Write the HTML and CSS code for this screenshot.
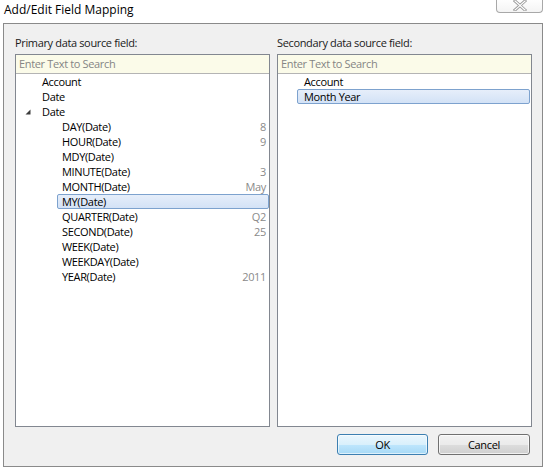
FILE: index.html
```html
<!DOCTYPE html>
<html>
<head>
<meta charset="utf-8">
<link rel="stylesheet" href="styles.css">
</head>
<body>
<div class="titlebar">
  <div class="title">Add/Edit Field Mapping</div>
  <div class="close">
    <svg width="14" height="11" viewBox="0 0 14 11">
      <path d="M2 1 L12 10 M12 1 L2 10" stroke="#9a9a9a" stroke-width="3" stroke-linecap="square" fill="none"/>
      <path d="M2 1 L12 10 M12 1 L2 10" stroke="#ffffff" stroke-width="1.2" stroke-linecap="square" fill="none"/>
    </svg>
  </div>
</div>
<div class="frame">
  <div class="columns">
    <div class="col">
      <div class="label">Primary data source field:</div>
      <div class="panel">
        <div class="search">Enter Text to Search</div>
        <div class="list">
          <div class="row top"><span class="name">Account</span></div>
          <div class="row top"><span class="name">Date</span></div>
          <div class="row top"><svg class="tri" width="6" height="6" viewBox="0 0 6 6"><polygon points="5.5,0.5 5.5,5.5 0.5,5.5" fill="#3c3c3c"/></svg><span class="name">Date</span></div>
          <div class="row child"><span class="name">DAY(Date)</span><span class="val">8</span></div>
          <div class="row child"><span class="name">HOUR(Date)</span><span class="val">9</span></div>
          <div class="row child"><span class="name">MDY(Date)</span><span class="val"></span></div>
          <div class="row child"><span class="name">MINUTE(Date)</span><span class="val">3</span></div>
          <div class="row child"><span class="name">MONTH(Date)</span><span class="val">May</span></div>
          <div class="row child sel"><span class="name">MY(Date)</span><span class="val"></span></div>
          <div class="row child"><span class="name">QUARTER(Date)</span><span class="val">Q2</span></div>
          <div class="row child"><span class="name">SECOND(Date)</span><span class="val">25</span></div>
          <div class="row child"><span class="name">WEEK(Date)</span><span class="val"></span></div>
          <div class="row child"><span class="name">WEEKDAY(Date)</span><span class="val"></span></div>
          <div class="row child"><span class="name">YEAR(Date)</span><span class="val">2011</span></div>
        </div>
      </div>
    </div>
    <div class="col">
      <div class="label">Secondary data source field:</div>
      <div class="panel">
        <div class="search">Enter Text to Search</div>
        <div class="list">
          <div class="row rtop"><span class="name">Account</span></div>
          <div class="row rtop sel"><span class="name">Month Year</span></div>
        </div>
      </div>
    </div>
  </div>
  <div class="buttons">
    <div class="btn ok">OK</div>
    <div class="btn cancel">Cancel</div>
  </div>
</div>
</body>
</html>
```

FILE: styles.css
```css
* { box-sizing: border-box; }
html, body {
  margin: 0;
  padding: 0;
  background: #ffffff;
  font-family: "Open Sans", "Noto Sans", sans-serif;
  font-size: 11px;
  letter-spacing: -0.35px;
  color: #000;
}
body { width: 548px; height: 472px; overflow: hidden; }

.titlebar {
  height: 23px;
  display: flex;
  justify-content: space-between;
  align-items: flex-start;
  padding-left: 4px;
  padding-right: 5px;
}
.title {
  font-size: 12px;
  letter-spacing: 0;
  line-height: 19px;
  color: #000;
}
.close {
  width: 47px;
  height: 14px;
  margin-top: -1px;
  border: 1px solid #a8a8a8;
  border-top: none;
  border-radius: 0 0 4px 4px;
  background: linear-gradient(#ffffff, #f4f4f4);
  display: flex;
  justify-content: center;
  align-items: center;
}

.frame {
  margin-left: 3px;
  width: 540px;
  height: 444px;
  border: 1px solid #8a8a8a;
  background: #f0f0f0;
  padding: 11px 10px 11px 11px;
  display: flex;
  flex-direction: column;
}
.columns {
  flex: 1;
  display: grid;
  grid-template-columns: 255px 255px;
  column-gap: 7px;
}
.col { display: flex; flex-direction: column; }
.label {
  line-height: 15px;
  height: 15px;
  margin-bottom: 4px;
  color: #1a1a1a;
}
.panel {
  flex: 1;
  border: 1px solid #828790;
  background: #fff;
  display: flex;
  flex-direction: column;
}
.search {
  height: 19px;
  line-height: 18px;
  background: #fbfbe9;
  border-bottom: 1px solid #b4b4b4;
  color: #858585;
  padding-left: 3px;
}
.row {
  height: 15px;
  line-height: 15px;
  display: flex;
  align-items: center;
  white-space: nowrap;
}
.row.top { padding-left: 26px; position: relative; }
.tri { position: absolute; left: 9px; top: 5px; }
.row.child {
  margin-left: 41px;
  padding-left: 4px;
  padding-right: 2px;
  justify-content: space-between;
  border: 1px solid transparent;
}
.row.rtop {
  margin-left: 19px;
  margin-right: 1px;
  padding-left: 6px;
  border: 1px solid transparent;
}
.row.sel {
  border: 1px solid #7da2ce;
  border-radius: 2px;
  background: linear-gradient(#e6eefa, #d3e2f6);
}
.val { color: #8a8a8a; }

.buttons {
  display: flex;
  justify-content: flex-end;
  gap: 10px;
  margin-top: 7px;
  padding-right: 2px;
}
.btn {
  width: 91px;
  height: 21px;
  line-height: 19px;
  text-align: center;
  border-radius: 3px;
  color: #000;
}
.ok {
  border: 1px solid #3c7fb1;
  background: linear-gradient(#eaf6fd 0%, #d9f0fc 50%, #bee6fd 51%, #a7d9f5 100%);
  box-shadow: inset 0 0 0 1px rgba(255,255,255,0.6);
}
.cancel {
  width: 92px;
  border: 1px solid #707070;
  background: linear-gradient(#f2f2f2 0%, #ebebeb 50%, #dddddd 51%, #cfcfcf 100%);
  box-shadow: inset 0 0 0 1px rgba(255,255,255,0.7);
}
```
